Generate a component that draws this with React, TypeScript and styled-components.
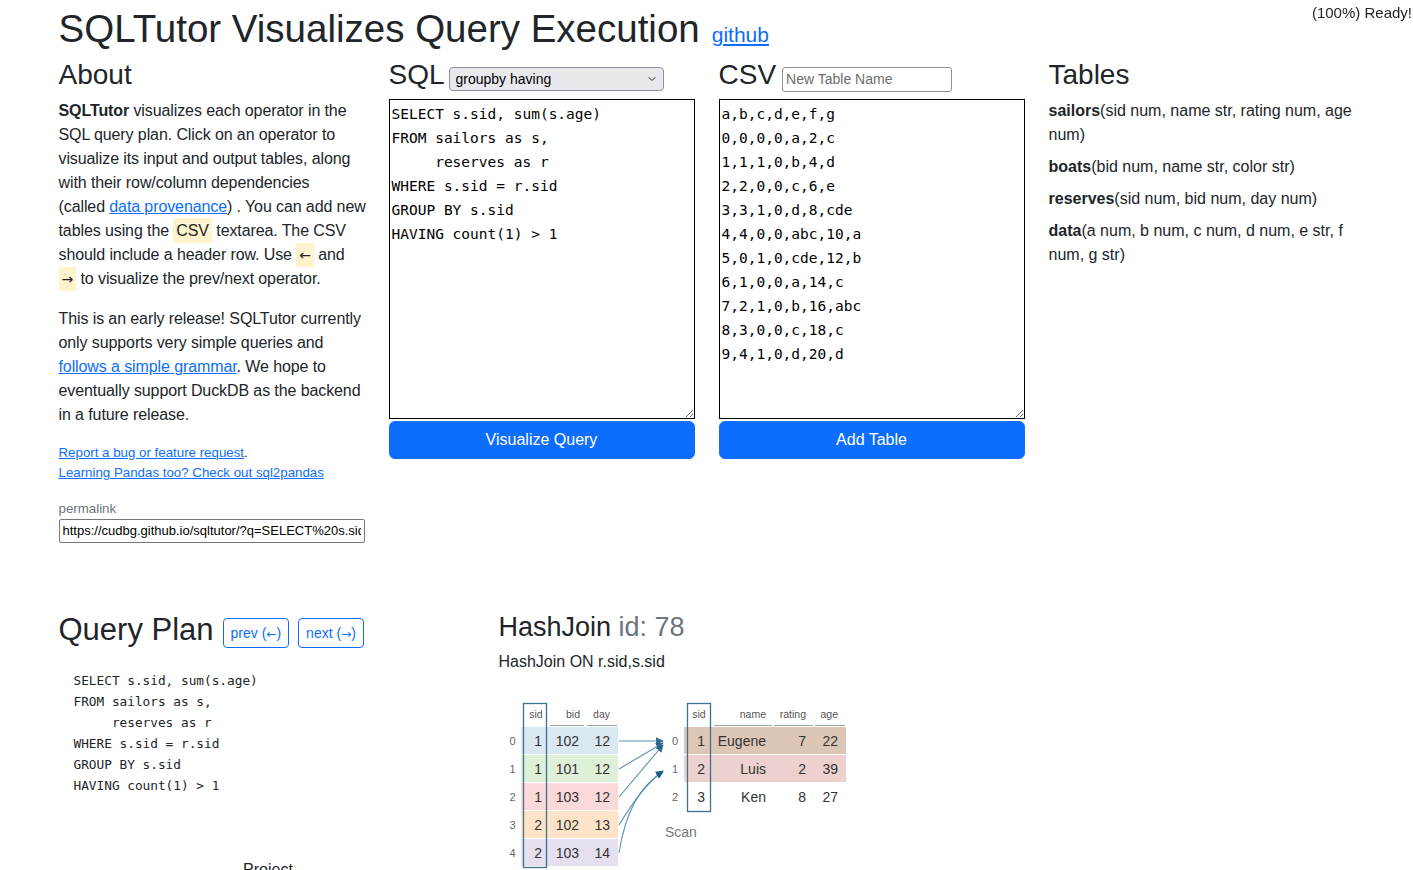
import styled, { createGlobalStyle } from 'styled-components';
import { ChevronDown } from 'lucide-react';

const SQL_TEXT = `SELECT s.sid, sum(s.age)
FROM sailors as s,
     reserves as r
WHERE s.sid = r.sid
GROUP BY s.sid
HAVING count(1) > 1`;

const CSV_TEXT = `a,b,c,d,e,f,g
0,0,0,0,a,2,c
1,1,1,0,b,4,d
2,2,0,0,c,6,e
3,3,1,0,d,8,cde
4,4,0,0,abc,10,a
5,0,1,0,cde,12,b
6,1,0,0,a,14,c
7,2,1,0,b,16,abc
8,3,0,0,c,18,c
9,4,1,0,d,20,d`;

const leftRows = [
  [1, 102, 12],
  [1, 101, 12],
  [1, 103, 12],
  [2, 102, 13],
  [2, 103, 14],
];
const leftColors = ['#d9e8f1', '#dff0d8', '#fbd9d9', '#fde4c8', '#e6dff0'];

const rightRows: [number, string, number, number][] = [
  [1, 'Eugene', 7, 22],
  [2, 'Luis', 2, 39],
  [3, 'Ken', 8, 27],
];
const rightColors = ['#dec6b7', '#ecd1cf', ''];

// arrows from each reserves row to the matching sailors row
const arrows = [
  'M120,51 L164,51',
  'M120,79 L164,53',
  'M120,107 L164,55',
  'M120,135 C134,112 148,92 164,81',
  'M120,163 C126,124 140,96 164,82',
];

const tables = [
  { name: 'sailors', cols: 'sid num, name str, rating num, age num' },
  { name: 'boats', cols: 'bid num, name str, color str' },
  { name: 'reserves', cols: 'sid num, bid num, day num' },
  { name: 'data', cols: 'a num, b num, c num, d num, e str, f num, g str' },
];

export default function App() {
  return (
    <>
      <GlobalStyle />
      <Status>(100%) Ready!</Status>
      <Page>
        <Title>
          <span>SQLTutor Visualizes Query Execution</span>
          <GithubLink href="#">github</GithubLink>
        </Title>

        <TopRow>
          <Col>
            <Head>
              <H3>About</H3>
            </Head>
            <Para $nowrap>
              <b>SQLTutor</b> visualizes each operator in the
              <br />
              SQL query plan. Click on an operator to
              <br />
              visualize its input and output tables, along
              <br />
              with their row/column dependencies
              <br />
              (called <a href="#">data provenance</a>) . You can add new
              <br />
              tables using the <Key>CSV</Key> textarea. The CSV
              <br />
              should include a header row. Use <Key $glyph>←</Key> and
              <br />
              <Key $glyph>→</Key> to visualize the prev/next operator.
            </Para>
            <Para>
              This is an early release! SQLTutor currently only supports very simple queries and{' '}
              <a href="#">follows a simple grammar</a>. We hope to eventually support DuckDB as the
              backend in a future release.
            </Para>
            <Links>
              <a href="#">Report a bug or feature request</a>.
              <br />
              <a href="#">Learning Pandas too? Check out sql2pandas</a>
            </Links>
            <Label>permalink</Label>
            <Permalink readOnly value="https://cudbg.github.io/sqltutor/?q=SELECT%20s.sid%2C%20sum(s.age)" />
          </Col>

          <Col>
            <Head>
              <H3>SQL</H3>
              <SelectBox>
                <Select defaultValue="groupby">
                  <option value="groupby">groupby having</option>
                </Select>
                <Chevron size={12} strokeWidth={2} />
              </SelectBox>
            </Head>
            <Editor defaultValue={SQL_TEXT} spellCheck={false} />
            <PrimaryButton>Visualize Query</PrimaryButton>
          </Col>

          <Col>
            <Head>
              <H3>CSV</H3>
              <NameInput placeholder="New Table Name" />
            </Head>
            <Editor defaultValue={CSV_TEXT} spellCheck={false} />
            <PrimaryButton>Add Table</PrimaryButton>
          </Col>

          <Col>
            <Head>
              <H3>Tables</H3>
            </Head>
            {tables.map((t) => (
              <TableDef key={t.name}>
                <b>{t.name}</b>({t.cols})
              </TableDef>
            ))}
          </Col>
        </TopRow>

        <PlanRow>
          <Col>
            <PlanHead>
              <H2>Query Plan</H2>
              <OutlineButton>
                prev (<Arrow>←</Arrow>)
              </OutlineButton>
              <OutlineButton>
                next (<Arrow>→</Arrow>)
              </OutlineButton>
            </PlanHead>
            <Code>{SQL_TEXT}</Code>
            <PlanTree width="428" height="140">
              <NodeText x="209" y="79" textAnchor="middle">
                Project
              </NodeText>
            </PlanTree>
          </Col>

          <Col>
            <OpTitle>
              HashJoin <OpId>id: 78</OpId>
            </OpTitle>
            <OpDesc>HashJoin ON r.sid,s.sid</OpDesc>
            <JoinViz width="360" height="180">
              <defs>
                <marker id="arrow" viewBox="0 0 10 10" refX="9" refY="5" markerWidth="7" markerHeight="7" orient="auto">
                  <path d="M0,0 L10,5 L0,10 z" fill="#1b5b82" />
                </marker>
              </defs>

              {/* reserves table */}
              <HeadText x="37" y="28" textAnchor="middle">sid</HeadText>
              <HeadText x="81" y="28" textAnchor="end">bid</HeadText>
              <HeadText x="111" y="28" textAnchor="end">day</HeadText>
              <line x1="51" y1="35.5" x2="85" y2="35.5" stroke="#a0a0a0" />
              <line x1="88" y1="35.5" x2="118" y2="35.5" stroke="#a0a0a0" />
              {leftRows.map((r, i) => (
                <g key={i}>
                  <rect x="22" y={37 + i * 28} width="97" height="27" fill={leftColors[i]} />
                  <IndexText x="13.5" y={55 + i * 28} textAnchor="middle">{i}</IndexText>
                  <CellText x="43" y={56 + i * 28} textAnchor="end">{r[0]}</CellText>
                  <CellText x="80" y={56 + i * 28} textAnchor="end">{r[1]}</CellText>
                  <CellText x="111" y={56 + i * 28} textAnchor="end">{r[2]}</CellText>
                </g>
              ))}
              <rect x="24.5" y="13.5" width="23" height="164" fill="none" stroke="#3c7193" strokeWidth="1.3" />

              {/* sailors table */}
              <HeadText x="200" y="28" textAnchor="middle">sid</HeadText>
              <HeadText x="267" y="28" textAnchor="end">name</HeadText>
              <HeadText x="307" y="28" textAnchor="end">rating</HeadText>
              <HeadText x="339" y="28" textAnchor="end">age</HeadText>
              <line x1="215" y1="35.5" x2="273" y2="35.5" stroke="#a0a0a0" />
              <line x1="275" y1="35.5" x2="314" y2="35.5" stroke="#a0a0a0" />
              <line x1="316" y1="35.5" x2="346" y2="35.5" stroke="#a0a0a0" />
              {rightRows.map((r, i) => (
                <g key={i}>
                  {rightColors[i] && <rect x="185" y={37 + i * 28} width="162" height="27" fill={rightColors[i]} />}
                  <IndexText x="176" y={55 + i * 28} textAnchor="middle">{i}</IndexText>
                  <CellText x="206" y={56 + i * 28} textAnchor="end">{r[0]}</CellText>
                  <CellText x="267" y={56 + i * 28} textAnchor="end">{r[1]}</CellText>
                  <CellText x="307" y={56 + i * 28} textAnchor="end">{r[2]}</CellText>
                  <CellText x="339" y={56 + i * 28} textAnchor="end">{r[3]}</CellText>
                </g>
              ))}
              <rect x="188.5" y="13.5" width="23" height="108" fill="none" stroke="#3c7193" strokeWidth="1.3" />
              <ScanText x="166" y="147">Scan</ScanText>

              {arrows.map((d, i) => (
                <path key={i} d={d} fill="none" stroke="#4a86ab" strokeWidth="1.1" opacity="0.9" markerEnd="url(#arrow)" />
              ))}
            </JoinViz>
          </Col>
        </PlanRow>
      </Page>
    </>
  );
}

const GlobalStyle = createGlobalStyle`
  html, body {
    margin: 0;
    overflow: hidden;
  }
  body {
    font-family: "Liberation Sans", Arial, sans-serif;
    font-size: 16px;
    line-height: 24px;
    color: #212529;
    background: #fff;
  }
  a {
    color: #0d6efd;
  }
`;

const Status = styled.div`
  position: fixed;
  top: 3px;
  right: 1px;
  font-size: 15px;
  line-height: 20px;
  color: #212529;
`;

const Page = styled.div`
  max-width: 1320px;
  margin: 0 auto;
`;

const Title = styled.h1`
  margin: 6px 0 6px;
  padding: 0 12px;
  display: flex;
  align-items: baseline;
  gap: 12px;
  font-size: 38.5px;
  font-weight: 400;
  line-height: 1.2;
`;

const GithubLink = styled.a`
  font-size: 21px;
`;

const TopRow = styled.div`
  display: grid;
  grid-template-columns: repeat(4, 330px);
`;

const PlanRow = styled.div`
  display: grid;
  grid-template-columns: 440px 880px;
  margin-top: 68px;
`;

const Col = styled.div`
  padding: 0 12px;
  min-width: 0;
`;

const Head = styled.div`
  display: flex;
  align-items: baseline;
  gap: 2px;
  margin-bottom: 7px;
`;

const H3 = styled.h3`
  margin: 0;
  font-size: 28px;
  font-weight: 400;
  line-height: 1.2;
`;

const Para = styled.p<{ $nowrap?: boolean }>`
  margin: 0 0 16px;
  letter-spacing: -0.1px;
  white-space: ${(p) => (p.$nowrap ? 'nowrap' : 'normal')};
`;

const Key = styled.span<{ $glyph?: boolean }>`
  background: #fff3cd;
  padding: 4px 3px;
  font-family: ${(p) => (p.$glyph ? '"DejaVu Sans", sans-serif' : 'inherit')};
  font-size: ${(p) => (p.$glyph ? '14px' : 'inherit')};
`;

const Arrow = styled.span`
  font-family: "DejaVu Sans", sans-serif;
  font-size: 12px;
`;

const Links = styled.div`
  font-size: 13.3px;
  line-height: 20px;
  margin-bottom: 16px;
`;

const Label = styled.div`
  font-size: 13.3px;
  line-height: 20px;
  color: #6c757d;
`;

const Permalink = styled.input`
  display: block;
  width: 100%;
  height: 24px;
  box-sizing: border-box;
  border: 1px solid #767676;
  border-radius: 2px;
  padding: 0 3px;
  font: 13px "Liberation Sans", Arial, sans-serif;
  color: #000;
`;

const SelectBox = styled.div`
  position: relative;
  width: 215px;
  margin-left: 2px;
`;

const Select = styled.select`
  appearance: none;
  width: 100%;
  height: 24px;
  border: 1px solid #8f8f9d;
  border-radius: 4px;
  background: #e9e9ed;
  padding: 0 20px 0 6px;
  font: 14px "Liberation Sans", Arial, sans-serif;
  color: #000;
`;

const Chevron = styled(ChevronDown)`
  position: absolute;
  right: 6px;
  top: 6px;
  color: #222;
  pointer-events: none;
`;

const NameInput = styled.input`
  width: 170px;
  height: 25px;
  margin-left: 4px;
  box-sizing: border-box;
  border: 1px solid #8f8f9d;
  border-radius: 3px;
  padding: 0 3px;
  font: 14px "Liberation Sans", Arial, sans-serif;

  &::placeholder {
    color: #6d6d6d;
  }
`;

const Editor = styled.textarea`
  display: block;
  box-sizing: border-box;
  width: 100%;
  height: 320px;
  margin: 1px 0 0;
  border: 1px solid #000;
  padding: 2px;
  font: 14.5px/24px "DejaVu Sans Mono", monospace;
  color: #000;
  resize: both;
`;

const PrimaryButton = styled.button`
  display: block;
  width: 100%;
  height: 38px;
  margin-top: 2px;
  background: #0d6efd;
  color: #fff;
  border: 1px solid #0d6efd;
  border-radius: 6px;
  font: 16px "Liberation Sans", Arial, sans-serif;
`;

const TableDef = styled.p`
  margin: 0 0 8px;
`;

const PlanHead = styled.div`
  display: flex;
  align-items: flex-end;
  gap: 9px;
`;

const H2 = styled.h2`
  margin: 0;
  font-size: 31px;
  font-weight: 400;
  line-height: 1.2;
`;

const OutlineButton = styled.button`
  height: 30px;
  padding: 0 7px;
  border: 1px solid #0d6efd;
  border-radius: 4px;
  background: #fff;
  color: #0d6efd;
  font: 14px "Liberation Sans", Arial, sans-serif;
`;

const Code = styled.pre`
  margin: 22px 0 0;
  padding-left: 15px;
  font: 12.75px/21px "DejaVu Sans Mono", monospace;
  color: #212529;
`;

const PlanTree = styled.svg`
  display: block;
`;

const NodeText = styled.text`
  font: 16px "Liberation Sans", Arial, sans-serif;
  fill: #212529;
`;

const OpTitle = styled.h3`
  margin: 0;
  font-size: 27px;
  font-weight: 400;
  line-height: 1.2;
`;

const OpId = styled.span`
  color: #6c757d;
`;

const OpDesc = styled.div`
  margin-top: 7px;
`;

const JoinViz = styled.svg`
  display: block;
  margin-top: 16px;
`;

const HeadText = styled.text`
  font: 10.5px "Liberation Sans", Arial, sans-serif;
  fill: #555;
`;

const IndexText = styled.text`
  font: 11px "Liberation Sans", Arial, sans-serif;
  fill: #666;
`;

const CellText = styled.text`
  font: 14px "Liberation Sans", Arial, sans-serif;
  fill: #333;
`;

const ScanText = styled.text`
  font: 14px "Liberation Sans", Arial, sans-serif;
  fill: #777;
`;
